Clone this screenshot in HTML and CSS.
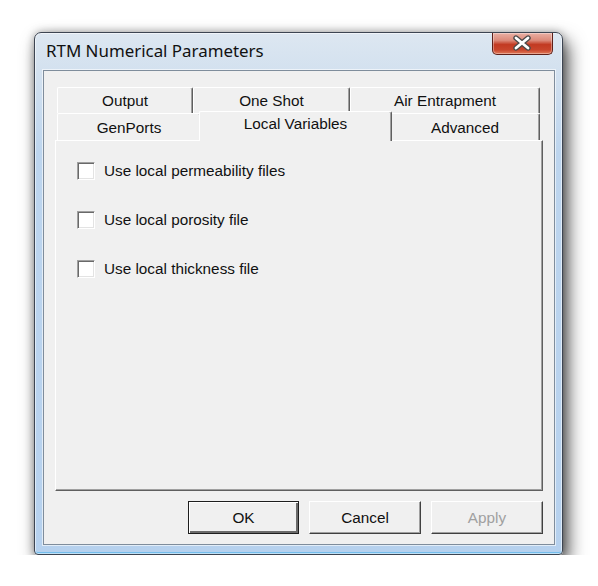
FILE: index.html
```html
<!DOCTYPE html>
<html>
<head>
<meta charset="utf-8">
<link rel="stylesheet" href="styles.css">
</head>
<body>
<div class="stage">
  <div class="window">
    <div class="titlebar">
      <div class="title">RTM Numerical Parameters</div>
      <div class="close">
        <svg width="61" height="22" viewBox="0 0 61 22">
          <path d="M24 6 L36 16 M36 6 L24 16" stroke="#4a4a4a" stroke-width="5.4" stroke-linecap="round" fill="none"/>
          <path d="M24 6 L36 16 M36 6 L24 16" stroke="#ffffff" stroke-width="2.8" stroke-linecap="round" fill="none"/>
        </svg>
      </div>
    </div>
    <div class="client">
      <div class="tabstrip">
        <div class="tabrow">
          <div class="tab w-output">Output</div>
          <div class="tab w-oneshot">One Shot</div>
          <div class="tab w-air">Air Entrapment</div>
        </div>
        <div class="tabrow">
          <div class="tab w-genports">GenPorts</div>
          <div class="tab w-local selected">Local Variables</div>
          <div class="tab w-advanced">Advanced</div>
        </div>
      </div>
      <div class="panel">
        <div class="option"><span class="check"></span><span class="label">Use local permeability files</span></div>
        <div class="option"><span class="check"></span><span class="label">Use local porosity file</span></div>
        <div class="option"><span class="check"></span><span class="label">Use local thickness file</span></div>
      </div>
      <div class="buttons">
        <div class="btn default">OK</div>
        <div class="btn">Cancel</div>
        <div class="btn disabled">Apply</div>
      </div>
    </div>
  </div>
</div>
</body>
</html>
```
FILE: styles.css
```css
html, body {
  margin: 0;
  background: #ffffff;
  font-family: "Liberation Sans", Arial, sans-serif;
  font-size: 15.3px;
  color: #111;
}
.stage {
  padding: 32px 0 0 34px;
}
.window {
  width: 529px;
  height: 523px;
  box-sizing: border-box;
  border: 1px solid #3d4552;
  border-radius: 7px 7px 4px 4px;
  background: linear-gradient(180deg, #dde7f1 0px, #d3e1ef 38px, #bdd5ee 120px, #b6d1ee 100%);
  padding: 0 7px 9px 8px;
  display: flex;
  flex-direction: column;
  box-shadow: 5px 9px 18px rgba(0,0,0,0.7), 0 0 8px rgba(0,0,0,0.3), inset 0 0 0 1px rgba(255,255,255,0.55), inset 0 -2px 0 #74bdec;
}
.titlebar {
  height: 37px;
  display: flex;
  align-items: flex-start;
  flex: none;
}
.title {
  font-family: "Noto Sans", "Open Sans", sans-serif;
  font-size: 16.9px;
  line-height: 20px;
  margin: 8px 0 0 3px;
  color: #111;
}
.close {
  margin-left: auto;
  margin-right: 2px;
  width: 61px;
  height: 22px;
  box-sizing: border-box;
  border: 1px solid #5e2019;
  border-top: none;
  border-radius: 0 0 5px 5px;
  background: linear-gradient(180deg, #eab0a4 0%, #dc8a7a 35%, #c23a22 55%, #c8452c 80%, #e07a58 100%);
  box-shadow: inset 0 0 0 1px rgba(255,255,255,0.35);
  overflow: hidden;
}
.close svg {
  display: block;
  margin: -1px 0 0 -1px;
}
.client {
  flex: 1;
  background: #f0f0f0;
  border: 1px solid #7f8d9c;
  box-shadow: 0 0 0 1px rgba(255,255,255,0.6);
  padding: 16px 11px 0 11px;
  display: flex;
  flex-direction: column;
}
.tabstrip {
  padding: 0 3px 0 2px;
  display: flex;
  flex-direction: column;
}
.tabrow {
  display: flex;
}
.tab {
  box-sizing: border-box;
  height: 26px;
  border-top: 1px solid #ffffff;
  border-left: 1px solid #ffffff;
  border-right: 1px solid #5f5f5f;
  border-radius: 2px 2px 0 0;
  box-shadow: inset -1px 0 0 #a0a0a0;
  display: flex;
  align-items: center;
  justify-content: center;
  background: #f0f0f0;
  line-height: 18px;
}
.tabrow + .tabrow .tab {
  height: 27px;
  padding-top: 1px;
}
.w-output { width: 136px; }
.w-oneshot { width: 157px; }
.w-air { width: 190px; }
.w-genports { width: 144px; }
.w-local { width: 189px; }
.w-advanced { width: 150px; }
.tabrow + .tabrow .tab.selected {
  position: relative;
  z-index: 1;
  width: 193px;
  height: 30px;
  margin: -2px -2px -1px;
  padding: 0 0 6px;
}
.panel {
  height: 351px;
  box-sizing: border-box;
  border-top: 1px solid #ffffff;
  border-left: 1px solid #ffffff;
  border-right: 1px solid #5f5f5f;
  border-bottom: 1px solid #5f5f5f;
  box-shadow: inset -1px -1px 0 #a0a0a0;
  padding: 21px 0 0 21px;
  display: flex;
  flex-direction: column;
  gap: 31px;
}
.option {
  display: flex;
  align-items: center;
  height: 18px;
}
.check {
  width: 18px;
  height: 18px;
  box-sizing: border-box;
  background: #fff;
  border-top: 1px solid #a0a0a0;
  border-left: 1px solid #a0a0a0;
  border-right: 1px solid #ffffff;
  border-bottom: 1px solid #ffffff;
  box-shadow: inset 1px 1px 0 #696969, inset -1px -1px 0 #e3e3e3;
  margin-right: 9px;
}
.label {
  line-height: 18px;
}
.buttons {
  display: flex;
  justify-content: flex-end;
  gap: 10px;
  margin-top: 10px;
}
.btn {
  width: 112px;
  height: 33px;
  box-sizing: border-box;
  border-top: 1px solid #ffffff;
  border-left: 1px solid #ffffff;
  border-right: 1px solid #404040;
  border-bottom: 1px solid #404040;
  box-shadow: inset -1px -1px 0 #a0a0a0;
  display: flex;
  align-items: center;
  justify-content: center;
  background: #f0f0f0;
}
.btn.default {
  width: 111px;
  border: 1px solid #1e1e1e;
  box-shadow: inset 1px 1px 0 #ffffff, inset -2px -2px 0 #6a6a6a;
}
.btn.disabled {
  color: #a0a0a0;
}
```
